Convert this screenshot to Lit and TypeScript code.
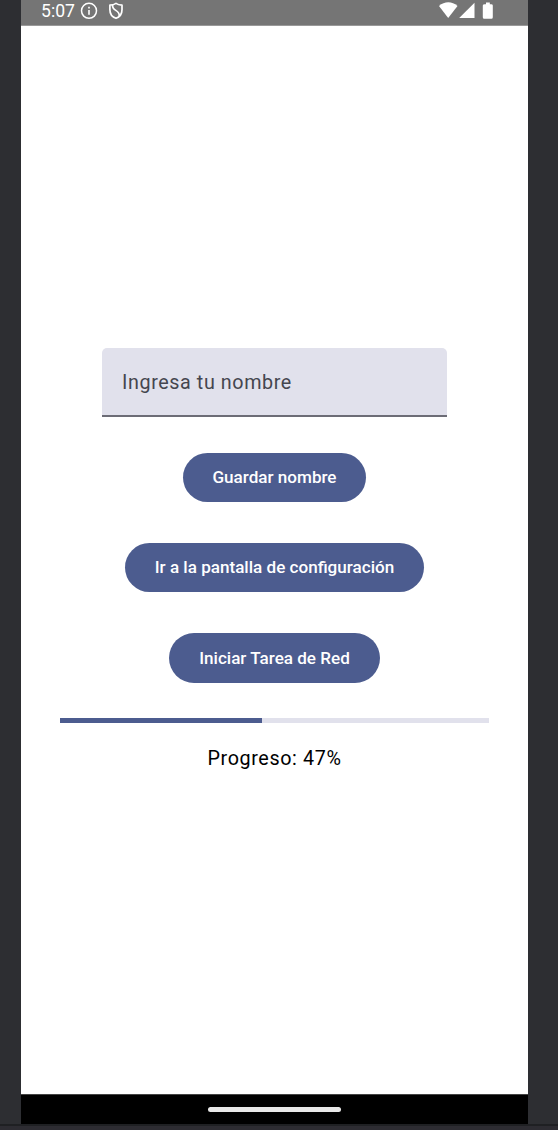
import { LitElement, html, css } from "lit";
import { customElement, property, state } from "lit/decorators.js";

@customElement("status-bar")
class StatusBar extends LitElement {
  static styles = css`
    :host {
      display: flex;
      justify-content: space-between;
      box-sizing: border-box;
      height: 26px;
      padding: 0 34px 0 20px;
      background: #757575;
      border-bottom: 1px solid #999;
      color: #fff;
      font: 400 17.6px/22px Roboto, sans-serif;
    }
    .group {
      display: flex;
      align-items: flex-start;
    }
    .info {
      margin: 2px 0 0 5px;
    }
    .shield {
      margin: 2px 0 0 10.5px;
    }
    svg {
      display: block;
    }
  `;
  render() {
    return html`
      <div class="group">
        <span>5:07</span>
        <svg class="info" width="18" height="18" viewBox="0 0 18 18" fill="none" stroke="#fff">
          <circle cx="9" cy="8.8" r="7.5" stroke-width="1.5" />
          <path d="M9 8v4.7M9 4.8v1.7" stroke-width="1.6" />
        </svg>
        <svg class="shield" width="16" height="18" viewBox="0 0 16 18" fill="none" stroke="#fff" stroke-width="1.7" stroke-linejoin="round">
          <path d="M8 1.4C6.2 2.7 4 3.1 1.9 3.2v4.6c0 4 2.2 7.2 6.1 8.5 3.9-1.3 6-4.5 6-8.5V3.2C12 3.1 9.8 2.7 8 1.4z" />
          <path d="M4.6 2.8c-.4 2.6.8 4.1 3.2 5.6 2.3 1.4 3.8 3 3.4 5.8" />
        </svg>
      </div>
      <svg width="55" height="20" viewBox="0 0 55 20" fill="#fff">
        <path d="M0 6.1C5.5 1.1 13 1.1 18.5 6.1L9.2 18z" />
        <path d="M20.2 18H35.5V2.8z" />
        <path d="M45.8 4.2h1.2V2.6h3.8v1.6h1.4q1.6 0 1.6 1.4v11.7q0 1.5-1.4 1.5h-7.2q-1.4 0-1.4-1.5V5.6q0-1.4 2-1.4z" />
      </svg>
    `;
  }
}

@customElement("filled-field")
class FilledField extends LitElement {
  @property() label = "";
  static styles = css`
    :host {
      display: flex;
      align-items: center;
      box-sizing: border-box;
      width: 345.4px;
      height: 69.3px;
      padding: 3.4px 20.3px 0;
      background: #e1e1ec;
      border-bottom: 2px solid #6c6c76;
      border-radius: 5px 5px 0 0;
      color: #45464f;
      font: 400 19.74px/28px Roboto, sans-serif;
      letter-spacing: 0.58px;
    }
  `;
  render() {
    return html`<span>${this.label}</span>`;
  }
}

@customElement("filled-button")
class FilledButton extends LitElement {
  static styles = css`
    :host {
      display: block;
    }
    .button {
      display: block;
      box-sizing: border-box;
      height: 49.3px;
      margin: 0;
      padding: 0 29.9px;
      border: 0;
      border-radius: 25px;
      background: #4c5c8f;
      color: #fff;
      font: 500 17.08px/49px Roboto, sans-serif;
      white-space: nowrap;
    }
  `;
  render() {
    return html`<button class="button"><slot></slot></button>`;
  }
}

@customElement("app-root")
class AppRoot extends LitElement {
  @state() private progress = 47;
  static styles = css`
    :host {
      display: flex;
      flex-direction: column;
      box-sizing: border-box;
      height: 1130px;
      background: #2d2e32;
    }
    .phone {
      display: flex;
      flex-direction: column;
      width: 507px;
      height: 1124px;
      margin-left: 21px;
      background: #fff;
    }
    .content {
      flex: 1;
      display: flex;
      flex-direction: column;
      align-items: center;
      padding-top: 321.6px;
    }
    .buttons {
      display: flex;
      flex-direction: column;
      align-items: center;
      gap: 41px;
      margin-top: 36px;
    }
    .track {
      width: 428.5px;
      height: 5px;
      margin-top: 35.5px;
      background: #e1e1ec;
    }
    .bar {
      height: 100%;
      background: #4c5c8f;
    }
    .progress {
      margin-top: 21px;
      color: #000;
      font: 400 19.74px/30px Roboto, sans-serif;
      letter-spacing: 0.617px;
    }
    .nav {
      display: flex;
      align-items: center;
      justify-content: center;
      box-sizing: border-box;
      height: 30px;
      border-top: 1px solid #444;
      background: #000;
    }
    .handle {
      width: 133px;
      height: 5px;
      border-radius: 2.5px;
      background: #e8e8e8;
    }
    .edge {
      height: 6px;
      box-sizing: border-box;
      border-top: 2px solid #1f2023;
      background: #2d2c32;
    }
  `;
  render() {
    return html`
      <div class="phone">
        <status-bar></status-bar>
        <div class="content">
          <filled-field label="Ingresa tu nombre"></filled-field>
          <div class="buttons">
            <filled-button>Guardar nombre</filled-button>
            <filled-button>Ir a la pantalla de configuración</filled-button>
            <filled-button>Iniciar Tarea de Red</filled-button>
          </div>
          <div class="track"><div class="bar" style="width:${this.progress}%"></div></div>
          <div class="progress">Progreso: ${this.progress}%</div>
        </div>
        <div class="nav"><div class="handle"></div></div>
      </div>
      <div class="edge"></div>
    `;
  }
}
